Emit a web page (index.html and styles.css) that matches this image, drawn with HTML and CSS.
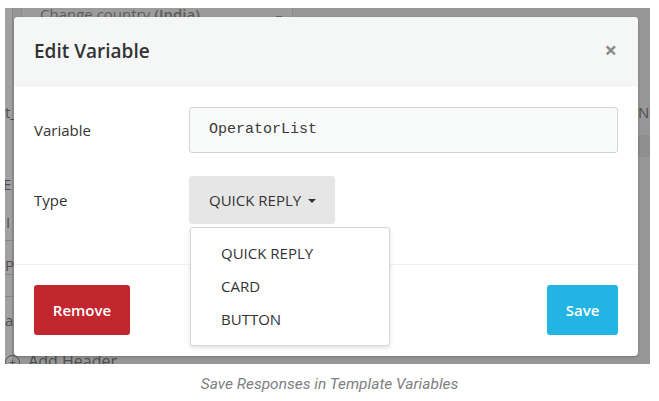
FILE: index.html
```html
<!DOCTYPE html>
<html>
<head>
<meta charset="utf-8">
<link rel="stylesheet" href="styles.css">
</head>
<body>
<div class="shot">
  <div class="page">
    <div class="strip"></div>
    <div class="country">Change country <b>(India)</b><span class="caret-bg"></span></div>
    <div class="peek p-t">t_</div>
    <div class="peek p-e">E</div>
    <div class="peek p-i">I</div>
    <div class="peek p-p">P</div>
    <div class="peek p-a">a</div>
    <div class="hline l1"></div>
    <div class="hline l2"></div>
    <div class="hline l3"></div>
    <div class="add-header"><span class="plus">+</span> Add Header</div>
    <div class="peek p-ne">Ne</div>
    <div class="right-band"></div>
  </div>
  <div class="modal">
    <div class="modal-header">
      <h2 class="modal-title">Edit Variable</h2>
      <span class="close">&times;</span>
    </div>
    <div class="modal-body">
      <div class="row">
        <label class="label">Variable</label>
        <div class="input">OperatorList</div>
      </div>
      <div class="row row-type">
        <label class="label">Type</label>
        <div class="dropdown">
          <button class="dd-btn">QUICK REPLY <span class="caret"></span></button>
          <ul class="menu">
            <li>QUICK REPLY</li>
            <li>CARD</li>
            <li>BUTTON</li>
          </ul>
        </div>
      </div>
    </div>
    <div class="modal-footer">
      <button class="btn btn-remove">Remove</button>
      <button class="btn btn-save">Save</button>
    </div>
  </div>
</div>
<p class="caption">Save Responses in Template Variables</p>
</body>
</html>
```
FILE: styles.css
```css
html, body {
  margin: 0;
  padding: 0;
  background: #ffffff;
}
body {
  width: 659px;
  height: 401px;
  overflow: hidden;
  font-family: "Open Sans", "Liberation Sans", sans-serif;
}
.shot {
  position: relative;
  margin: 8px 0 0 5px;
  width: 645px;
  height: 356px;
  background: #979797;
  overflow: hidden;
}
.page {
  position: absolute;
  inset: 0;
}
.strip {
  position: absolute;
  left: 0;
  top: 0;
  width: 7px;
  height: 356px;
  background: #a0a0a0;
  border-right: 1px solid #8a8a8a;
}
.country {
  position: absolute;
  left: 16px;
  top: -10px;
  width: 252px;
  height: 24px;
  padding-left: 18px;
  border: 1px solid #8c8c8c;
  background: #9c9c9c;
  color: #5c5c5c;
  font-size: 15px;
  line-height: 30px;
}
.country b { font-weight: 600; }
.caret-bg {
  position: absolute;
  left: 254px;
  top: 17px;
  width: 6px;
  height: 2px;
  background: #666666;
}
.peek {
  position: absolute;
  color: #4e4e4e;
  font-size: 15px;
}
.p-t { left: 0; top: 94px; }
.p-e { left: -2px; top: 166px; }
.p-i { left: 1px; top: 204px; }
.p-p { left: 0; top: 247px; }
.p-a { left: 0; top: 302px; }
.p-ne { left: 633px; top: 94px; }
.hline {
  position: absolute;
  left: 0;
  width: 9px;
  height: 1px;
  background: #868686;
}
.l1 { top: 232px; }
.l2 { top: 266px; }
.l3 { top: 288px; }
.right-band {
  position: absolute;
  left: 633px;
  top: 127px;
  width: 12px;
  height: 22px;
  background: #8f8f8f;
}
.add-header {
  position: absolute;
  left: 0;
  top: 342px;
  color: #4e4e4e;
  font-size: 16px;
}
.plus {
  display: inline-block;
  width: 13px;
  height: 13px;
  border: 1px solid #4e4e4e;
  border-radius: 50%;
  font-size: 12px;
  line-height: 13px;
  text-align: center;
  margin-right: 4px;
}

.modal {
  position: absolute;
  left: 9px;
  top: 9px;
  width: 624px;
  height: 339px;
  background: #ffffff;
  border-radius: 4px;
  box-shadow: 0 1px 3px rgba(0,0,0,0.25);
  display: flex;
  flex-direction: column;
}
.modal-header {
  height: 68px;
  background: #f5f6f6;
  border-bottom: 1px solid #eeeeee;
  border-radius: 4px 4px 0 0;
  display: flex;
  align-items: center;
  justify-content: space-between;
  padding: 0 21px 0 20px;
}
.modal-title {
  margin: 0;
  font-size: 19px;
  font-weight: 600;
  color: #333333;
  padding-bottom: 1px;
}
.close {
  font-size: 22px;
  font-weight: 700;
  color: #8a8a8a;
  line-height: 1;
  padding-bottom: 4px;
}
.modal-body {
  padding: 21px 20px 0 20px;
  height: 157px;
  border-bottom: 1px solid #f0f0f0;
}
.row {
  display: flex;
  align-items: center;
}
.row-type {
  margin-top: 23px;
}
.label {
  width: 155px;
  font-size: 15px;
  color: #333333;
}
.input {
  flex: 1;
  height: 44px;
  border: 1px solid #d4d4d4;
  border-radius: 3px;
  background: #f9fafa;
  font-family: "Liberation Mono", "DejaVu Sans Mono", monospace;
  font-size: 15px;
  color: #3a3a3a;
  line-height: 44px;
  padding-left: 19px;
}
.dropdown {
  position: relative;
}
.dd-btn {
  height: 48px;
  width: 146px;
  border: none;
  border-radius: 3px;
  background: #e6e6e6;
  font-family: "Open Sans", "Liberation Sans", sans-serif;
  font-size: 15px;
  color: #333333;
  padding: 0 0 0 20px;
  text-align: left;
}
.caret {
  display: inline-block;
  width: 0;
  height: 0;
  border-left: 4px solid transparent;
  border-right: 4px solid transparent;
  border-top: 4px solid #333333;
  vertical-align: middle;
  margin-left: 3px;
  margin-top: -2px;
}
.menu {
  position: absolute;
  left: 1px;
  top: 51px;
  width: 200px;
  height: 119px;
  margin: 0;
  padding: 9px 0 0 0;
  list-style: none;
  background: #ffffff;
  border: 1px solid #d6d6d6;
  border-radius: 3px;
  box-shadow: 0 2px 4px rgba(0,0,0,0.12);
  box-sizing: border-box;
  z-index: 2;
}
.menu li {
  height: 33px;
  line-height: 33px;
  padding-left: 30px;
  font-size: 15px;
  color: #333333;
}
.modal-footer {
  flex: 1;
  display: flex;
  justify-content: space-between;
  align-items: flex-start;
  padding: 20px 20px 0 20px;
}
.btn {
  height: 50px;
  border: none;
  border-radius: 3px;
  font-family: "Open Sans", "Liberation Sans", sans-serif;
  font-size: 15px;
  font-weight: 600;
  color: #ffffff;
}
.btn-remove {
  width: 96px;
  background: #c1272d;
}
.btn-save {
  width: 71px;
  background: #22b4e2;
}
.caption {
  margin: 0;
  padding-top: 11px;
  text-align: center;
  font-family: Roboto, "Open Sans", sans-serif;
  font-style: italic;
  font-size: 15.5px;
  color: #808080;
}
```
